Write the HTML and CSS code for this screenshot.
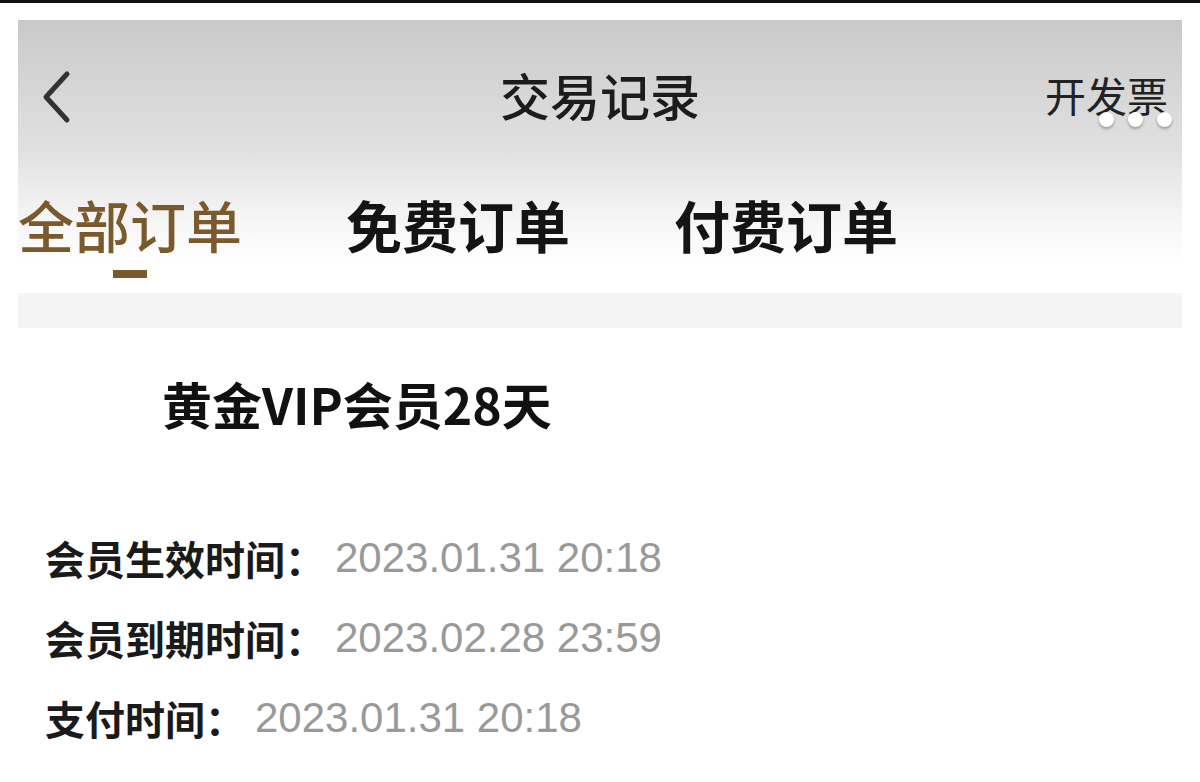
FILE: index.html
```html
<!DOCTYPE html>
<html lang="zh-CN">
<head>
  <meta charset="UTF-8" />
  <meta name="viewport" content="width=device-width, initial-scale=1.0"/>
  <title>交易记录</title>
  <link rel="stylesheet" href="styles.css">
</head>
<body>
  <div class="topline"></div>

  <div class="page">
    <div class="header">
      <div class="nav">
        <div class="back">
          <svg width="32" height="56" viewBox="0 0 32 56">
            <polyline points="26,4 5,27 26,50" fill="none" stroke="#333" stroke-width="5" stroke-linecap="round" stroke-linejoin="round"/>
          </svg>
        </div>
        <div class="title">交易记录</div>
        <div class="invoice">
          开发票
          <div class="dots"><span></span><span></span><span></span></div>
        </div>
      </div>

      <div class="tabs">
        <div class="tab active">全部订单<i class="bar"></i></div>
        <div class="tab">免费订单</div>
        <div class="tab">付费订单</div>
      </div>
    </div>

    <div class="band"></div>

    <div class="order">
      <h3 class="order-name">黄金VIP会员28天</h3>
      <div class="rows">
        <div class="row"><span class="label">会员生效时间：</span><span class="value">2023.01.31 20:18</span></div>
        <div class="row"><span class="label">会员到期时间：</span><span class="value">2023.02.28 23:59</span></div>
        <div class="row"><span class="label">支付时间：</span><span class="value">2023.01.31 20:18</span></div>
      </div>
    </div>
  </div>
</body>
</html>
```

FILE: styles.css
```css
body {
  margin: 0;
  background: #fff;
  font-family: "Noto Sans CJK SC", "Liberation Sans", sans-serif;
  color: #1a1a1a;
}
.topline {
  height: 3px;
  background: #111;
}
.page {
  padding: 17px 18px 0;
}
.header {
  background: linear-gradient(#c9c9c9 0%, #e2e2e2 50%, #f6f6f6 75%, #fff 90%);
  height: 270px;
}
.nav {
  height: 148px;
  padding-bottom: 12px;
  display: grid;
  grid-template-columns: 1fr auto 1fr;
  align-items: center;
}
.back {
  padding-left: 23px;
  display: flex;
  align-items: center;
  padding-top: 8px;
}
.title {
  font-size: 50px;
  font-weight: 500;
  line-height: 1;
  color: #1c1c1c;
}
.invoice {
  justify-self: end;
  position: relative;
  font-size: 41px;
  line-height: 1;
  padding-right: 14px;
  color: #222;
}
.dots {
  position: absolute;
  right: 10px;
  top: 38px;
  display: flex;
  gap: 14px;
}
.dots span {
  width: 15px;
  height: 15px;
  border-radius: 50%;
  background: #fff;
  box-shadow: 0 2px 3px rgba(0, 0, 0, 0.3);
}
.tabs {
  display: flex;
  gap: 104px;
  padding-top: 14px;
}
.tab {
  font-size: 56px;
  font-weight: 700;
  line-height: 60px;
  color: #141414;
  display: flex;
  flex-direction: column;
  align-items: center;
}
.tab.active {
  font-weight: 500;
  color: #7a5a2c;
}
.bar {
  width: 34px;
  height: 8px;
  margin-top: 16px;
  background: #7a5a2c;
}
.band {
  height: 35px;
  margin-top: 3px;
  background: #f4f4f4;
}
.order {
  padding-top: 45px;
}
.order-name {
  margin: 0;
  padding-left: 144px;
  font-size: 50px;
  line-height: 60px;
  font-weight: 700;
  color: #111;
}
.rows {
  margin-top: 85px;
  padding-left: 27px;
}
.row {
  height: 80px;
  display: flex;
  align-items: center;
}
.label {
  font-size: 40px;
  font-weight: 600;
  color: #1a1a1a;
}
.value {
  margin-left: 10px;
  font-family: "Liberation Sans", Arial, sans-serif;
  font-size: 42px;
  color: #999;
}
```
